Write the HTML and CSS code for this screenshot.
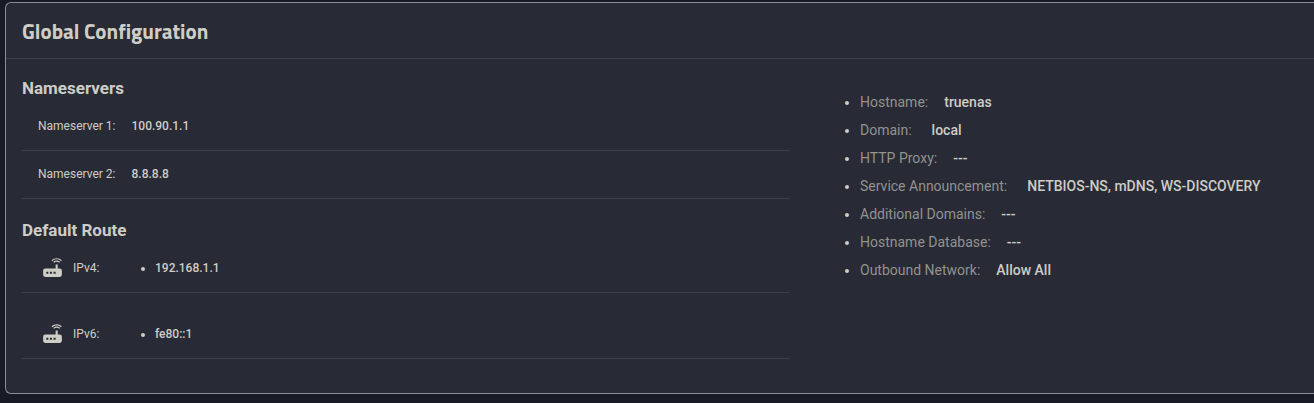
FILE: index.html
```html
<!DOCTYPE html>
<html lang="en">
<head>
<meta charset="utf-8">
<meta name="viewport" content="width=device-width, initial-scale=1">
<title>Global Configuration</title>
<link rel="stylesheet" href="styles.css">
</head>
<body>
<svg class="sprite" aria-hidden="true">
  <symbol id="router" viewBox="0 0 24 24">
    <path d="M20.2,5.9L21,5.1C19.6,3.7 17.8,3 16,3C14.2,3 12.4,3.7 11,5.1L11.8,5.9C13,4.8 14.5,4.2 16,4.2C17.5,4.2 19,4.8 20.2,5.9M19.3,6.7C18.4,5.8 17.2,5.3 16,5.3C14.8,5.3 13.6,5.8 12.7,6.7L13.5,7.5C14.2,6.8 15.1,6.5 16,6.5C16.9,6.5 17.8,6.8 18.5,7.5L19.3,6.7M19,13H17V9H15V13H5A2,2 0 0,0 3,15V19A2,2 0 0,0 5,21H19A2,2 0 0,0 21,19V15A2,2 0 0,0 19,13M8,18H6V16H8V18M11.5,18H9.5V16H11.5V18M15,18H13V16H15V18Z"/>
  </symbol>
</svg>
<main class="card">
  <header class="card-header">
    <h1 class="card-title">Global Configuration</h1>
  </header>
  <div class="card-body">
    <div class="network">
      <section class="group">
        <h2 class="group-title">Nameservers</h2>
        <div class="row"><span>Nameserver 1:</span><span class="row-value">100.90.1.1</span></div>
        <div class="row"><span>Nameserver 2:</span><span class="row-value">8.8.8.8</span></div>
      </section>
      <section class="group">
        <h2 class="group-title">Default Route</h2>
        <div class="row route">
          <svg class="icon" aria-hidden="true"><use href="#router"/></svg>
          <span class="route-label">IPv4:</span>
          <ul class="route-list"><li>192.168.1.1</li></ul>
        </div>
        <div class="row route">
          <svg class="icon" aria-hidden="true"><use href="#router"/></svg>
          <span class="route-label">IPv6:</span>
          <ul class="route-list"><li>fe80::1</li></ul>
        </div>
      </section>
    </div>
    <ul class="details">
      <li><span class="label">Hostname:</span><span class="value">truenas</span></li>
      <li><span class="label">Domain:</span><span class="value wide">local</span></li>
      <li><span class="label">HTTP Proxy:</span><span class="value">---</span></li>
      <li><span class="label">Service Announcement:</span><span class="value wide">NETBIOS-NS, mDNS, WS-DISCOVERY</span></li>
      <li><span class="label">Additional Domains:</span><span class="value">---</span></li>
      <li><span class="label">Hostname Database:</span><span class="value">---</span></li>
      <li><span class="label">Outbound Network:</span><span class="value">Allow All</span></li>
    </ul>
  </div>
</main>
</body>
</html>
```
FILE: styles.css
```css
* {
  box-sizing: border-box;
}

body {
  margin: 0;
  padding: 2px 0 9px 5px;
  background: #181a26;
  color: #cecdc6;
  font-family: Roboto, sans-serif;
  font-size: 12px;
}

.sprite {
  display: none;
}

.card {
  border: 1px solid #8b8e99;
  border-right: 0;
  border-radius: 6px 0 0 6px;
  background: #282a35;
}

.card-header {
  padding: 15px 16px 14px;
  border-bottom: 1px solid #3d3f49;
}

.card-title {
  margin: 0;
  font-family: "Titillium Web", "Noto Sans", sans-serif;
  font-size: 21px;
  font-weight: 700;
  line-height: 26px;
}

.card-body {
  display: grid;
  grid-template-columns: 768fr 494fr;
  gap: 30px;
  padding: 16px 0 34px 16px;
}

.group-title {
  margin: 0 0 1px;
  font-size: 17px;
  font-weight: 700;
  line-height: 27px;
}

.group + .group {
  margin-top: 18px;
}

.row {
  display: flex;
  align-items: center;
  gap: 16px;
  height: 48px;
  padding: 0 16px 2px;
  border-bottom: 1px solid #3d3f49;
}

.row-value {
  font-weight: 500;
}

.route {
  gap: 8px;
  padding: 0 18px 2px;
}

.route + .route {
  height: 66px;
  padding-top: 18px;
}

.icon {
  width: 25px;
  height: 25px;
  fill: currentColor;
}

.route-label {
  width: 42px;
}

.route-list {
  margin: 0;
  padding-left: 32px;
  font-weight: 500;
}

.details {
  margin: 13px 0 0;
  padding-left: 40px;
  font-size: 14px;
  line-height: 28px;
}

.label {
  color: #929290;
}

.value {
  margin-left: 16px;
  font-weight: 500;
}

.value.wide {
  margin-left: 20px;
}
```
